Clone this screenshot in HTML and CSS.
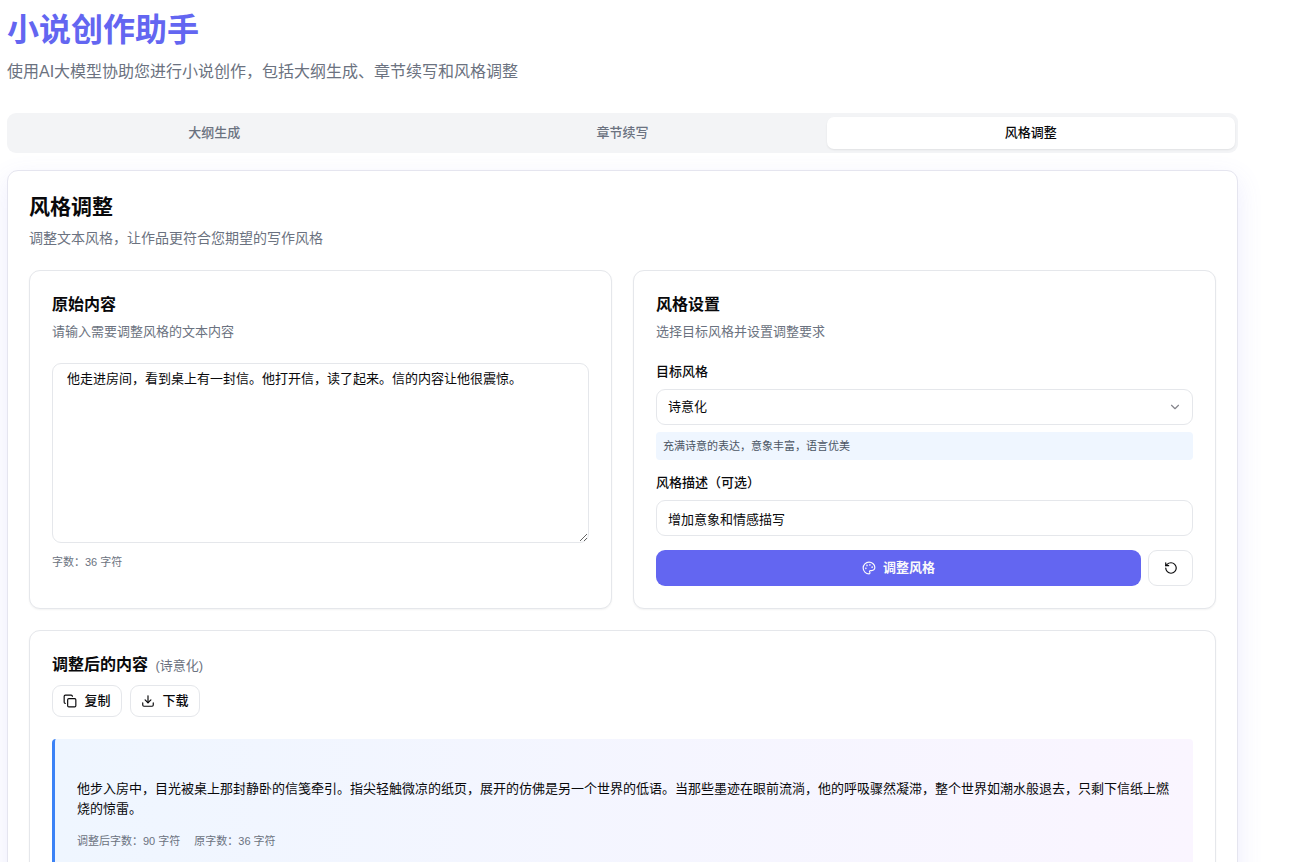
FILE: index.html
```html
<!DOCTYPE html>
<html lang="zh-CN">
<head>
    <meta charset="UTF-8">
    <meta name="viewport" content="width=device-width, initial-scale=1.0">
    <title>小说创作助手</title>
    <link rel="stylesheet" href="styles.css">
</head>
<body>

    <header class="page-header">
        <h1>小说创作助手</h1>
        <p>使用AI大模型协助您进行小说创作，包括大纲生成、章节续写和风格调整</p>
    </header>

    <div class="tabs" role="tablist">
        <button class="tab" role="tab" type="button">大纲生成</button>
        <button class="tab" role="tab" type="button">章节续写</button>
        <button class="tab active" role="tab" type="button" aria-selected="true">风格调整</button>
    </div>

    <main class="panel">
        <div class="panel-header">
            <h2>风格调整</h2>
            <p>调整文本风格，让作品更符合您期望的写作风格</p>
        </div>

        <div class="columns">
            <section class="card">
                <h3 id="source-title">原始内容</h3>
                <p class="card-desc">请输入需要调整风格的文本内容</p>
                <textarea class="source" aria-labelledby="source-title">他走进房间，看到桌上有一封信。他打开信，读了起来。信的内容让他很震惊。</textarea>
                <p class="count">字数：36 字符</p>
            </section>

            <section class="card">
                <h3>风格设置</h3>
                <p class="card-desc">选择目标风格并设置调整要求</p>
                <label for="style">目标风格</label>
                <div class="select-wrap">
                    <select id="style" class="field">
                        <option selected>诗意化</option>
                    </select>
                    <svg class="chevron" viewBox="0 0 24 24"><path d="m6 9 6 6 6-6"/></svg>
                </div>
                <p class="hint">充满诗意的表达，意象丰富，语言优美</p>
                <label for="desc">风格描述（可选）</label>
                <input id="desc" class="field" type="text" value="增加意象和情感描写">
                <div class="actions">
                    <button class="btn primary" type="button">
                        <svg class="icon" viewBox="0 0 24 24"><circle cx="13.5" cy="6.5" r=".5"/><circle cx="17.5" cy="10.5" r=".5"/><circle cx="8.5" cy="7.5" r=".5"/><circle cx="6.5" cy="12.5" r=".5"/><path d="M12 2C6.5 2 2 6.5 2 12s4.500 10 10 10c.926 0 1.648-.746 1.648-1.688 0-.437-.18-.835-.437-1.125-.29-.289-.438-.652-.438-1.125a1.640 1.640 0 0 1 1.668-1.668h1.996c3.051 0 5.555-2.503 5.555-5.554C21.965 6.012 17.461 2 12 2z"/></svg>
                        调整风格
                    </button>
                    <button class="btn reset" type="button" aria-label="重置">
                        <svg class="icon" viewBox="0 0 24 24"><path d="M3 12a9 9 0 1 0 9-9 9.750 9.750 0 0 0-6.740 2.740L3 8"/><path d="M3 3v5h5"/></svg>
                    </button>
                </div>
            </section>
        </div>

        <section class="card">
            <h3>调整后的内容 <span class="style-name">(诗意化)</span></h3>
            <div class="tools">
                <button class="btn small" type="button">
                    <svg class="icon" viewBox="0 0 24 24"><rect x="8" y="8" width="14" height="14" rx="2"/><path d="M4 16c-1.100 0-2-.9-2-2V4c0-1.100.9-2 2-2h10c1.100 0 2 .9 2 2"/></svg>
                    复制
                </button>
                <button class="btn small" type="button">
                    <svg class="icon" viewBox="0 0 24 24"><path d="M21 15v4a2 2 0 0 1-2 2H5a2 2 0 0 1-2-2v-4"/><path d="m7 10 5 5 5-5"/><path d="M12 15V3"/></svg>
                    下载
                </button>
            </div>
            <div class="result">
                <p class="result-text">他步入房中，目光被桌上那封静卧的信笺牵引。指尖轻触微凉的纸页，展开的仿佛是另一个世界的低语。当那些墨迹在眼前流淌，他的呼吸骤然凝滞，整个世界如潮水般退去，只剩下信纸上燃烧的惊雷。</p>
                <p class="result-meta"><span>调整后字数：90 字符</span><span>原字数：36 字符</span></p>
            </div>
        </section>
    </main>

</body>
</html>
```
FILE: styles.css
```css
* { box-sizing: border-box; }
body { margin: 0; padding: 10px 55px 24px 7px; background: #fff; color: #09090b; font-family: "Liberation Sans", "Noto Sans CJK SC", sans-serif; font-size: 13px; line-height: 18px; }
h1, h2, h3, p { margin: 0; }
button, input, select, textarea { font: inherit; color: inherit; }

.page-header { margin-bottom: 29px; }
.page-header h1 { color: #6366f1; font-size: 32px; line-height: 40px; }
.page-header p { margin-top: 10px; color: #6b7280; font-size: 16px; line-height: 24px; }

.tabs { display: grid; grid-template-columns: repeat(3, 1fr); padding: 4px 3px; margin-bottom: 17px; background: #f3f4f6; border-radius: 9px; }
.tab { height: 32px; padding: 0; border: none; border-radius: 7px; background: none; color: #6b7280; font-weight: 500; cursor: pointer; }
.tab.active { background: #fff; color: #09090b; box-shadow: 0 1px 2px rgba(0, 0, 0, 0.08); }

.panel { padding: 21px; border: 1px solid #e5e5ef; border-radius: 11px; background: #fff; box-shadow: 0 9px 27px rgba(99, 102, 241, 0.12); }
.panel-header { margin-bottom: 22px; }
.panel-header h2 { font-size: 21px; line-height: 30px; }
.panel-header p { margin-top: 6px; color: #6b7280; font-size: 14px; line-height: 20px; }

.columns { display: grid; grid-template-columns: 1fr 1fr; gap: 21px; margin-bottom: 21px; }
.card { padding: 22px; border: 1px solid #e5e7eb; border-radius: 11px; background: #fff; box-shadow: 0 1px 2px rgba(0, 0, 0, 0.05); }
.card h3 { font-size: 16px; line-height: 24px; }
.card-desc { margin: 6px 0 22px; color: #6b7280; }
.card label { display: block; margin-bottom: 8px; font-weight: 500; }

.source { display: block; width: 100%; height: 180px; padding: 6px 14px; border: 1px solid #e5e7eb; border-radius: 9px; background: #fff; resize: vertical; outline: none; }
.count { margin-top: 10px; color: #6b7280; font-size: 11px; }

.field { display: block; width: 100%; height: 36px; padding: 0 11px; border: 1px solid #e5e7eb; border-radius: 9px; background: #fff; outline: none; }
.select-wrap { position: relative; }
.select-wrap .field { appearance: none; }
.chevron { position: absolute; top: 11px; right: 11px; width: 14px; height: 14px; fill: none; stroke: #85858c; stroke-width: 2; stroke-linecap: round; stroke-linejoin: round; pointer-events: none; }
.hint { margin: 7px 0 14px; padding: 5px 7px; border-radius: 4px; background: #eff6ff; color: #4b5563; font-size: 11px; }

.actions { display: flex; gap: 7px; margin-top: 14px; }
.btn { display: inline-flex; align-items: center; justify-content: center; gap: 7px; height: 36px; border: 1px solid #e5e7eb; border-radius: 9px; background: #fff; font-weight: 500; cursor: pointer; }
.btn.primary { flex: 1; border: none; background: #6366f1; color: #fafafa; font-weight: 700; }
.btn.reset { width: 45px; }
.btn.small { width: 70px; height: 32px; padding: 0; }
.icon { width: 14px; height: 14px; fill: none; stroke: currentColor; stroke-width: 2; stroke-linecap: round; stroke-linejoin: round; }

.style-name { margin-left: 3px; color: #6b7280; font-size: 13px; font-weight: 400; }
.tools { display: flex; gap: 8px; margin: 7px 0 22px; }
.result { padding: 40px 22px; border-left: 3px solid #3b82f6; border-radius: 4px; background: linear-gradient(to right, #eff6ff, #faf5ff); }
.result-text { line-height: 20px; }
.result-meta { display: flex; gap: 14px; margin-top: 13px; color: #6b7280; font-size: 11px; }
```
